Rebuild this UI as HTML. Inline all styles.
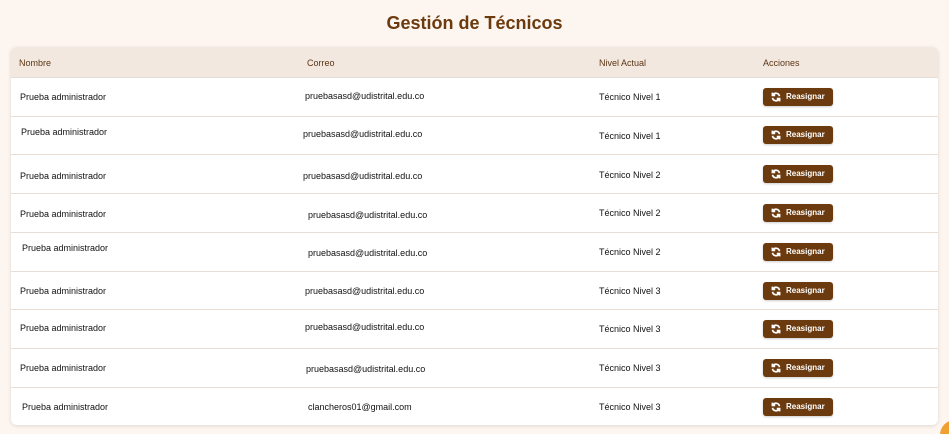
<!DOCTYPE html><html><head><meta charset="utf-8"><style>
html,body{margin:0;width:949px;height:434px;overflow:hidden}
body{background:#fdf5ef;font-family:"Liberation Sans",sans-serif;position:relative}
h1{position:absolute;top:13px;left:0;width:949px;text-align:center;margin:0;font-size:18px;color:#6b3a0e;font-weight:bold}
.card{position:absolute;left:11px;top:47px;width:927px;height:378px;background:#fff;border-radius:6px;box-shadow:0 1px 4px rgba(0,0,0,.12);overflow:hidden}
.hd{position:absolute;left:0;top:0;width:100%;height:30px;background:#f3e8df}
.t{position:absolute;font-size:9px;color:#111;white-space:nowrap;transform:translateY(-50%)}
.h{color:#5a3515}
.line{position:absolute;left:0;width:100%;height:1px;background:#e8ddd4}
.btn{position:absolute;left:752px;width:70px;height:18px;background:#6b3a0e;border-radius:3px;color:#fff;font-size:8px;font-weight:bold;line-height:18px;box-sizing:border-box;padding-left:23px;box-shadow:0 1px 2px rgba(0,0,0,.2)}
.btn svg{position:absolute;left:8px;top:4px}
.orb{position:absolute;left:940px;top:420px;width:30px;height:30px;border-radius:50%;background:#f0a030}
</style></head><body>
<h1>Gestión de Técnicos</h1>
<div class="card">
<div class="hd"></div>
<div class="t h" style="left:8px;top:16px">Nombre</div>
<div class="t h" style="left:296px;top:16px">Correo</div>
<div class="t h" style="left:588px;top:16px">Nivel Actual</div>
<div class="t h" style="left:752px;top:16px">Acciones</div>
<div class="line" style="top:30px"></div>
<div class="line" style="top:69px"></div>
<div class="line" style="top:107px"></div>
<div class="line" style="top:146px"></div>
<div class="line" style="top:185px"></div>
<div class="line" style="top:224px"></div>
<div class="line" style="top:262px"></div>
<div class="line" style="top:301px"></div>
<div class="line" style="top:340px"></div>
</div>
<div class="orb"></div>
<div style="position:absolute;left:0;top:0">
<div class="t" style="left:20px;top:97px">Prueba administrador</div><div class="t" style="left:305px;top:96px">pruebasasd@udistrital.edu.co</div><div class="t" style="left:599px;top:97px">Técnico Nivel 1</div>
<div class="t" style="left:21px;top:132px">Prueba administrador</div><div class="t" style="left:303px;top:134px">pruebasasd@udistrital.edu.co</div><div class="t" style="left:599px;top:136px">Técnico Nivel 1</div>
<div class="t" style="left:20px;top:176px">Prueba administrador</div><div class="t" style="left:303px;top:176px">pruebasasd@udistrital.edu.co</div><div class="t" style="left:599px;top:175px">Técnico Nivel 2</div>
<div class="t" style="left:20px;top:214px">Prueba administrador</div><div class="t" style="left:308px;top:215px">pruebasasd@udistrital.edu.co</div><div class="t" style="left:599px;top:213px">Técnico Nivel 2</div>
<div class="t" style="left:22px;top:248px">Prueba administrador</div><div class="t" style="left:308px;top:253px">pruebasasd@udistrital.edu.co</div><div class="t" style="left:599px;top:252px">Técnico Nivel 2</div>
<div class="t" style="left:20px;top:291px">Prueba administrador</div><div class="t" style="left:305px;top:291px">pruebasasd@udistrital.edu.co</div><div class="t" style="left:599px;top:291px">Técnico Nivel 3</div>
<div class="t" style="left:20px;top:328px">Prueba administrador</div><div class="t" style="left:305px;top:327px">pruebasasd@udistrital.edu.co</div><div class="t" style="left:599px;top:329px">Técnico Nivel 3</div>
<div class="t" style="left:20px;top:368px">Prueba administrador</div><div class="t" style="left:306px;top:369px">pruebasasd@udistrital.edu.co</div><div class="t" style="left:599px;top:368px">Técnico Nivel 3</div>
<div class="t" style="left:22px;top:407px">Prueba administrador</div><div class="t" style="left:308px;top:407px">clancheros01@gmail.com</div><div class="t" style="left:599px;top:407px">Técnico Nivel 3</div>
</div>
<div style="position:absolute;left:11px;top:0">
<div class="btn" style="top:88px"><svg width="10" height="10" viewBox="0 0 10 10" fill="none" stroke="#fff" stroke-width="1.7"><path d="M8.5 4.2A3.6 3.6 0 0 0 1.9 3"/><path d="M1.5 5.8A3.6 3.6 0 0 0 8.1 7"/><path d="M1.4 0.6V3.4H4.2"/><path d="M8.6 9.4V6.6H5.8"/></svg>Reasignar</div>
<div class="btn" style="top:126px"><svg width="10" height="10" viewBox="0 0 10 10" fill="none" stroke="#fff" stroke-width="1.7"><path d="M8.5 4.2A3.6 3.6 0 0 0 1.9 3"/><path d="M1.5 5.8A3.6 3.6 0 0 0 8.1 7"/><path d="M1.4 0.6V3.4H4.2"/><path d="M8.6 9.4V6.6H5.8"/></svg>Reasignar</div>
<div class="btn" style="top:165px"><svg width="10" height="10" viewBox="0 0 10 10" fill="none" stroke="#fff" stroke-width="1.7"><path d="M8.5 4.2A3.6 3.6 0 0 0 1.9 3"/><path d="M1.5 5.8A3.6 3.6 0 0 0 8.1 7"/><path d="M1.4 0.6V3.4H4.2"/><path d="M8.6 9.4V6.6H5.8"/></svg>Reasignar</div>
<div class="btn" style="top:204px"><svg width="10" height="10" viewBox="0 0 10 10" fill="none" stroke="#fff" stroke-width="1.7"><path d="M8.5 4.2A3.6 3.6 0 0 0 1.9 3"/><path d="M1.5 5.8A3.6 3.6 0 0 0 8.1 7"/><path d="M1.4 0.6V3.4H4.2"/><path d="M8.6 9.4V6.6H5.8"/></svg>Reasignar</div>
<div class="btn" style="top:243px"><svg width="10" height="10" viewBox="0 0 10 10" fill="none" stroke="#fff" stroke-width="1.7"><path d="M8.5 4.2A3.6 3.6 0 0 0 1.9 3"/><path d="M1.5 5.8A3.6 3.6 0 0 0 8.1 7"/><path d="M1.4 0.6V3.4H4.2"/><path d="M8.6 9.4V6.6H5.8"/></svg>Reasignar</div>
<div class="btn" style="top:282px"><svg width="10" height="10" viewBox="0 0 10 10" fill="none" stroke="#fff" stroke-width="1.7"><path d="M8.5 4.2A3.6 3.6 0 0 0 1.9 3"/><path d="M1.5 5.8A3.6 3.6 0 0 0 8.1 7"/><path d="M1.4 0.6V3.4H4.2"/><path d="M8.6 9.4V6.6H5.8"/></svg>Reasignar</div>
<div class="btn" style="top:320px"><svg width="10" height="10" viewBox="0 0 10 10" fill="none" stroke="#fff" stroke-width="1.7"><path d="M8.5 4.2A3.6 3.6 0 0 0 1.9 3"/><path d="M1.5 5.8A3.6 3.6 0 0 0 8.1 7"/><path d="M1.4 0.6V3.4H4.2"/><path d="M8.6 9.4V6.6H5.8"/></svg>Reasignar</div>
<div class="btn" style="top:359px"><svg width="10" height="10" viewBox="0 0 10 10" fill="none" stroke="#fff" stroke-width="1.7"><path d="M8.5 4.2A3.6 3.6 0 0 0 1.9 3"/><path d="M1.5 5.8A3.6 3.6 0 0 0 8.1 7"/><path d="M1.4 0.6V3.4H4.2"/><path d="M8.6 9.4V6.6H5.8"/></svg>Reasignar</div>
<div class="btn" style="top:398px"><svg width="10" height="10" viewBox="0 0 10 10" fill="none" stroke="#fff" stroke-width="1.7"><path d="M8.5 4.2A3.6 3.6 0 0 0 1.9 3"/><path d="M1.5 5.8A3.6 3.6 0 0 0 8.1 7"/><path d="M1.4 0.6V3.4H4.2"/><path d="M8.6 9.4V6.6H5.8"/></svg>Reasignar</div>
</div>
</body></html>
